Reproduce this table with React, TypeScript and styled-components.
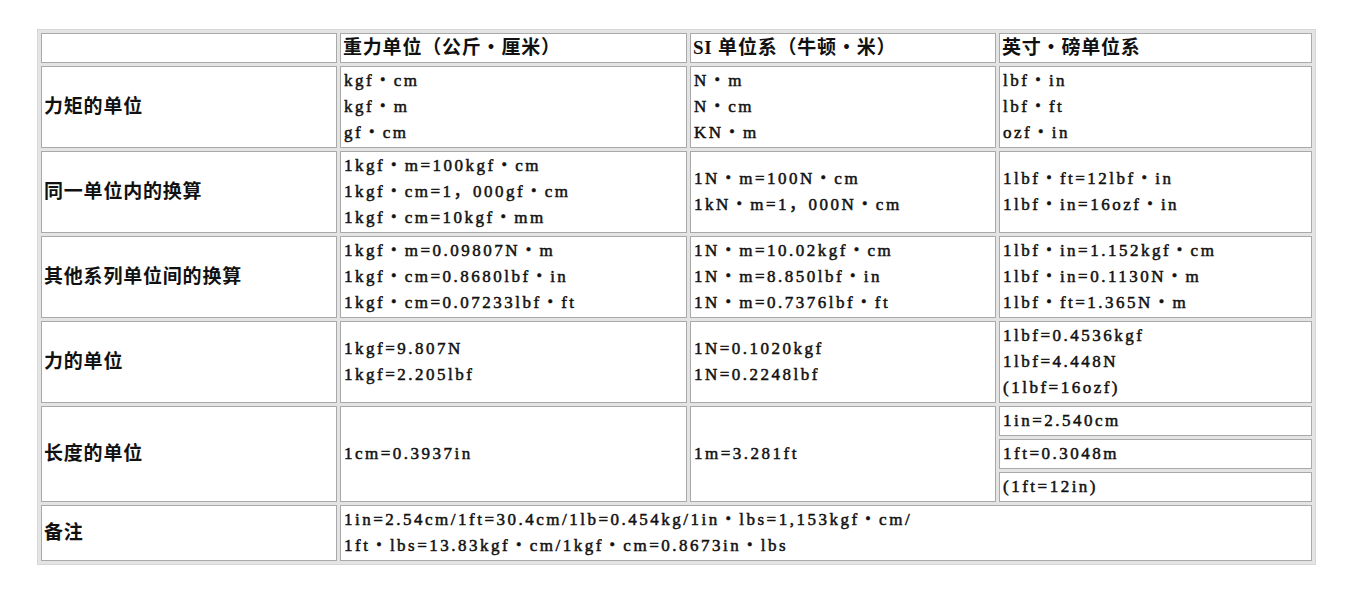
import React from "react";
import styled, { createGlobalStyle } from "styled-components";

const GlobalStyle = createGlobalStyle`
  html, body {
    margin: 0;
    padding: 0;
    background: #fff;
  }
`;

const Page = styled.div`
  padding: 29px 0 0 37px;
`;

const Table = styled.table`
  width: 1279px;
  table-layout: fixed;
  border-collapse: separate;
  border-spacing: 3px;
  border: 1px solid #d6d6d6;
  background: #e4e4e4;
`;

const Col = styled.col<{ $w: number }>`
  width: ${({ $w }) => $w}px;
`;

const BaseCell = styled.td`
  box-sizing: border-box;
  background: #fff;
  border: 1px solid #a9a9a9;
  padding: 1px 3px;
  line-height: 26px;
  vertical-align: middle;
  color: #111;
  font-family: "Liberation Serif", "Noto Sans CJK SC", serif;
  white-space: nowrap;
`;

const LabelCell = styled(BaseCell)`
  font-size: 19px;
  font-weight: 600;
  letter-spacing: 0.8px;
  padding-left: 2px;
`;

const ValueCell = styled(BaseCell)`
  font-size: 17px;
  letter-spacing: 2.5px;
  -webkit-text-stroke: 0.5px #111;
`;

const Line = styled.div`
  display: block;
`;

type Row = {
  label: string;
  cells: string[][];
};

const header = ["", "重力单位（公斤・厘米）", "SI 单位系（牛顿・米）", "英寸・磅单位系"];

const rows: Row[] = [
  {
    label: "力矩的单位",
    cells: [
      ["kgf・cm", "kgf・m", "gf・cm"],
      ["N・m", "N・cm", "KN・m"],
      ["lbf・in", "lbf・ft", "ozf・in"],
    ],
  },
  {
    label: "同一单位内的换算",
    cells: [
      ["1kgf・m=100kgf・cm", "1kgf・cm=1，000gf・cm", "1kgf・cm=10kgf・mm"],
      ["1N・m=100N・cm", "1kN・m=1，000N・cm"],
      ["1lbf・ft=12lbf・in", "1lbf・in=16ozf・in"],
    ],
  },
  {
    label: "其他系列单位间的换算",
    cells: [
      ["1kgf・m=0.09807N・m", "1kgf・cm=0.8680lbf・in", "1kgf・cm=0.07233lbf・ft"],
      ["1N・m=10.02kgf・cm", "1N・m=8.850lbf・in", "1N・m=0.7376lbf・ft"],
      ["1lbf・in=1.152kgf・cm", "1lbf・in=0.1130N・m", "1lbf・ft=1.365N・m"],
    ],
  },
  {
    label: "力的单位",
    cells: [
      ["1kgf=9.807N", "1kgf=2.205lbf"],
      ["1N=0.1020kgf", "1N=0.2248lbf"],
      ["1lbf=0.4536kgf", "1lbf=4.448N", "(1lbf=16ozf)"],
    ],
  },
];

const lengthRow = {
  label: "长度的单位",
  gravity: "1cm=0.3937in",
  si: "1m=3.281ft",
  imperial: ["1in=2.540cm", "1ft=0.3048m", "(1ft=12in)"],
};

const notes = [
  "1in=2.54cm/1ft=30.4cm/1lb=0.454kg/1in・lbs=1,153kgf・cm/",
  "1ft・lbs=13.83kgf・cm/1kgf・cm=0.8673in・lbs",
];

const Lines = ({ items }: { items: string[] }) => (
  <>
    {items.map((text, i) => (
      <Line key={i}>{text}</Line>
    ))}
  </>
);

export default function App() {
  return (
    <>
      <GlobalStyle />
      <Page>
        <Table>
          <colgroup>
            <Col $w={296} />
            <Col $w={347} />
            <Col $w={306} />
            <Col $w={313} />
          </colgroup>
          <tbody>
            <tr>
              {header.map((text, i) => (
                <LabelCell key={i}>{text}</LabelCell>
              ))}
            </tr>
            {rows.map((row) => (
              <tr key={row.label}>
                <LabelCell>{row.label}</LabelCell>
                {row.cells.map((lines, i) => (
                  <ValueCell key={i}>
                    <Lines items={lines} />
                  </ValueCell>
                ))}
              </tr>
            ))}
            <tr>
              <LabelCell rowSpan={3}>{lengthRow.label}</LabelCell>
              <ValueCell rowSpan={3}>{lengthRow.gravity}</ValueCell>
              <ValueCell rowSpan={3}>{lengthRow.si}</ValueCell>
              <ValueCell>{lengthRow.imperial[0]}</ValueCell>
            </tr>
            <tr>
              <ValueCell>{lengthRow.imperial[1]}</ValueCell>
            </tr>
            <tr>
              <ValueCell>{lengthRow.imperial[2]}</ValueCell>
            </tr>
            <tr>
              <LabelCell>备注</LabelCell>
              <ValueCell colSpan={3}>
                <Lines items={notes} />
              </ValueCell>
            </tr>
          </tbody>
        </Table>
      </Page>
    </>
  );
}
